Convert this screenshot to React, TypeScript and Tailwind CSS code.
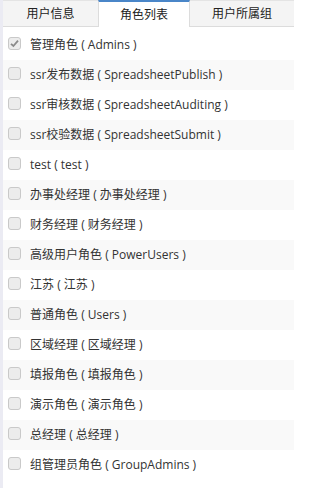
import React from "react";

const roles = [
  { name: "管理角色", code: "Admins", checked: true },
  { name: "ssr发布数据", code: "SpreadsheetPublish" },
  { name: "ssr审核数据", code: "SpreadsheetAuditing" },
  { name: "ssr校验数据", code: "SpreadsheetSubmit" },
  { name: "test", code: "test" },
  { name: "办事处经理", code: "办事处经理" },
  { name: "财务经理", code: "财务经理" },
  { name: "高级用户角色", code: "PowerUsers" },
  { name: "江苏", code: "江苏" },
  { name: "普通角色", code: "Users" },
  { name: "区域经理", code: "区域经理" },
  { name: "填报角色", code: "填报角色" },
  { name: "演示角色", code: "演示角色" },
  { name: "总经理", code: "总经理" },
  { name: "组管理员角色", code: "GroupAdmins" },
];

const Box = ({ checked }: { checked?: boolean }) => (
  <span className="flex h-[13px] w-[13px] shrink-0 items-center justify-center rounded-[3px] border border-[#c9c9c9] bg-[#ececec]">
    {checked && (
      <svg width="9" height="9" viewBox="0 0 9 9">
        <path d="M1 4.8 L3.4 7 L8 1.6" fill="none" stroke="#8a8a8a" strokeWidth="1.8" />
      </svg>
    )}
  </span>
);

export default function App() {
  return (
    <div
      className="flex h-[488px] w-[294px] bg-white text-[#333]"
      style={{ fontFamily: '"Open Sans", "Noto Sans CJK SC", sans-serif' }}
    >
      <div className="w-[3px] shrink-0 bg-[#ebebf3]" />
      <div className="flex flex-1 flex-col">
        <div className="flex h-[27px] border-b border-[#dcdcdc] bg-[#f4f4f4] text-[12px] text-[#222]">
          <div className="flex w-[95px] items-center justify-center border-t border-[#e4e4e4]">用户信息</div>
          <div className="-mb-px flex w-[92px] items-center justify-center border-x border-t-2 border-[#dcdcdc] border-t-[#4a86c8] bg-white">
            角色列表
          </div>
          <div className="flex flex-1 items-center justify-center border-t border-[#e4e4e4]">用户所属组</div>
        </div>
        <div className="pt-[3px]">
          {roles.map((r, i) => (
            <div
              key={r.name}
              className={`flex h-[30px] items-center gap-[9px] pl-[5px] text-[12px] ${i % 2 ? "bg-[#f9f9f9]" : "bg-white"}`}
            >
              <span className="-mt-[3px]">
                <Box checked={r.checked} />
              </span>
              <span>
                {r.name} ( {r.code} )
              </span>
            </div>
          ))}
        </div>
      </div>
    </div>
  );
}
